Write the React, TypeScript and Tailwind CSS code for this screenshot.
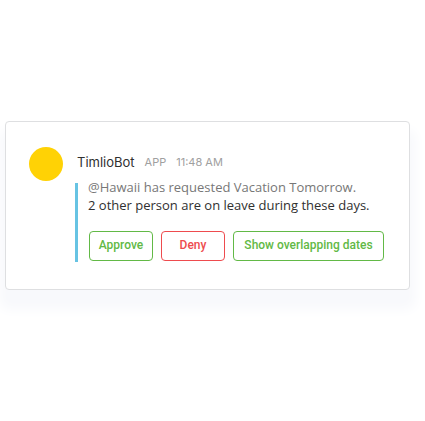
const buttonBase =
  "h-[30px] rounded border bg-white pb-[2px] text-center text-[12px] leading-4 font-medium whitespace-nowrap";

export default function App() {
  return (
    <main className="flex min-h-screen flex-col justify-center bg-white pr-[15px] pb-[10px] pl-[5px] font-['Roboto','Noto_Sans',sans-serif]">
      <article className="flex gap-3 rounded border border-[#dedfe1] bg-white pt-6 pr-6 pb-[27px] pl-[23px] shadow-[0_14px_12px_6px_#f8f9fc]">
        <div className="mt-px size-[34px] shrink-0 rounded-full bg-[#ffd205]" />
        <div className="min-w-0 grow">
          <header className="flex h-[37px] items-start gap-[10px] pt-2 pl-[2px] font-['Inter','Noto_Sans',sans-serif] leading-4">
            <h1 className="text-[13px] text-[#303030]">TimlioBot</h1>
            <span className="text-[11px] text-[#a0a0a0]">APP</span>
            <time className="text-[11px] text-[#a0a0a0]">11:48 AM</time>
          </header>
          <div className="flex flex-col border-l-[3px] border-[#67c3e3] pl-[10px] whitespace-nowrap">
            <div className="-mt-[5px] font-['Open_Sans','Noto_Sans',sans-serif] text-[13px] leading-[18px]">
              <p className="text-[#777777]">@Hawaii has requested Vacation Tomorrow.</p>
              <p className="text-[#303030]">2 other person are on leave during these days.</p>
            </div>
            <div className="flex gap-2 pt-[17px] pb-px pl-px">
              <button type="button" className={`${buttonBase} w-16 border-[#62b946] text-[#62b946]`}>Approve</button>
              <button type="button" className={`${buttonBase} w-16 border-[#ee4b4e] text-[#ee4b4e]`}>Deny</button>
              <button type="button" className={`${buttonBase} w-[151px] border-[#62b946] text-[#62b946]`}>Show overlapping dates</button>
            </div>
          </div>
        </div>
      </article>
    </main>
  );
}
